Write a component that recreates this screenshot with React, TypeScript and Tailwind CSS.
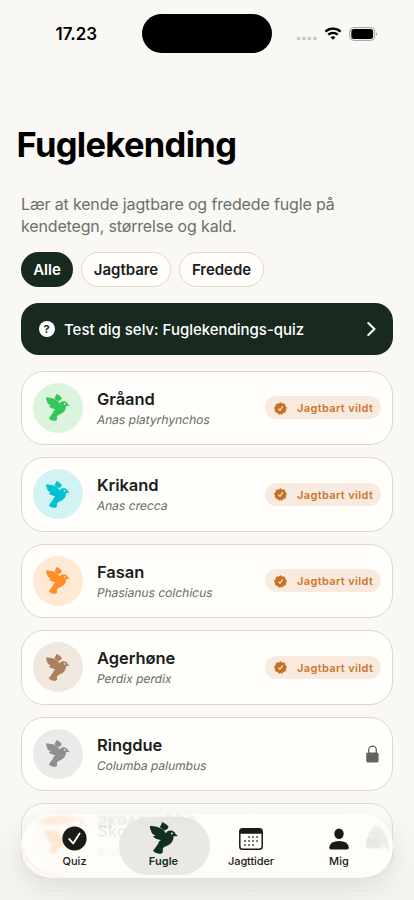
import React from 'react';

interface Bird {
  name: string;
  latin: string;
  color: string;
  huntable: boolean;
}

const BIRDS: Bird[] = [
  { name: 'Gråand', latin: 'Anas platyrhynchos', color: '#34c759', huntable: true },
  { name: 'Krikand', latin: 'Anas crecca', color: '#00c3d0', huntable: true },
  { name: 'Fasan', latin: 'Phasianus colchicus', color: '#ff8d28', huntable: true },
  { name: 'Agerhøne', latin: 'Perdix perdix', color: '#ac7f5e', huntable: true },
  { name: 'Ringdue', latin: 'Columba palumbus', color: '#8e8e93', huntable: false },
  { name: 'Skovsneppe', latin: 'Scolopax rusticola', color: '#ff8d28', huntable: false },
];

const BirdIcon = ({ className }: { className?: string }) => (
  <svg viewBox="0 0 82 94" className={className} fill="currentColor">
    <path d="M35 0C44 3 52 9 54 14C54 19 49 22 43 25C37 22 31 19 29 15C30 10 35 7 35 0Z" />
    <path
      fillRule="evenodd"
      d="M0 11C14 12 32 16 40 24C43 27 45 31 47 33C49 27 55 24 62 25C69 26 73 30 75 35L82 41L69 42C69 58 59 68 45 72C38 75 36 79 38 86C37 92 33 94 28 93C21 93 15 90 9 85C14 77 22 69 25 62C24 59 28 56 32 53C21 52 12 48 9 42C12 41 15 41 17 40C8 37 3 32 3 26C0 21 -1 16 0 11ZM64 31A3 3 0 1 0 64 37A3 3 0 1 0 64 31Z"
    />
  </svg>
);

const SealIcon = () => (
  <svg viewBox="0 0 24 24" className="h-[13px] w-[13px] shrink-0">
    <path
      fill="#c96f22"
      d="M12 1L15.4 3.4L19.6 3.6L20.6 7.6L23.4 10.6L21.8 14.2L21.4 18.4L17.6 19.8L14.8 22.8L12 21.8L9.2 22.8L6.4 19.8L2.6 18.4L2.2 14.2L0.6 10.6L3.4 7.6L4.4 3.6L8.6 3.4Z"
      stroke="#c96f22"
      strokeLinejoin="round"
    />
    <path d="M8.4 12.6L11 15.6L15.6 8.6" fill="none" stroke="#f9eadf" strokeWidth="2" strokeLinecap="round" strokeLinejoin="round" />
  </svg>
);

const LockIcon = () => (
  <svg viewBox="0 0 13 18" className="mr-[2px] h-[18px] w-[13px]">
    <path d="M2.7 8V4.9a3.8 3.8 0 0 1 7.6 0V8" fill="none" stroke="#5f665e" strokeWidth="1.3" />
    <rect x="0.2" y="7.4" width="12.4" height="10.1" rx="1.7" fill="#5f665e" />
  </svg>
);

const StatusBar = () => (
  <div className="flex h-[52px] items-start pt-[14px]">
    <div className="w-[142px] pl-[55.5px] pt-[7px] text-[17px] leading-[26px] font-semibold">17.23</div>
    <div className="h-[38.5px] w-[130px] rounded-full bg-black" />
    <svg viewBox="0 0 84 20" className="mt-[10px] ml-[23px] h-[20px] w-[84px]">
      <g fill="#c9c8c4">
        <circle cx="3.5" cy="14.4" r="1.9" />
        <circle cx="9" cy="14.4" r="1.9" />
        <circle cx="14.4" cy="14.4" r="1.9" />
        <circle cx="19.8" cy="14.4" r="1.9" />
      </g>
      <g fill="none" stroke="#000" strokeWidth="2.3">
        <path d="M30.4 7.6a11.3 11.3 0 0 1 15.2 0" />
        <path d="M33.2 10.7a7.1 7.1 0 0 1 9.6 0" />
      </g>
      <path d="M35.5 13.2a4.1 4.1 0 0 1 5 0L38 15.8Z" fill="#000" />
      <rect x="54.7" y="3.6" width="25" height="12.8" rx="4" fill="none" stroke="#a3a29f" />
      <rect x="56.3" y="5.1" width="21.8" height="9.8" rx="2.7" fill="#000" />
      <path d="M81 8.2c1.6.6 1.6 3 0 3.6Z" fill="#a3a29f" />
    </svg>
  </div>
);

const BirdCard = ({ bird }: { bird: Bird }) => (
  <div className="flex h-[74.5px] shrink-0 items-center rounded-[23px] border border-[#ddd8c6] bg-[#fffefb] px-[11px]">
    <div className="relative flex h-[50px] w-[50px] items-center justify-center" style={{ color: bird.color }}>
      <div className="absolute inset-0 rounded-full bg-current opacity-[0.18]" />
      <BirdIcon className="h-[27px] w-[24px]" />
    </div>
    <div className="ml-[14px] flex-1 pt-[2px]">
      <p className="text-[16.5px] leading-[22px] font-semibold tracking-[-0.05px] text-[#1a211d]">{bird.name}</p>
      <p className="-skew-x-[11deg] text-[12px] leading-[20px] tracking-[0.01px] text-[#666b65]">{bird.latin}</p>
    </div>
    {bird.huntable ? (
      <div className="flex h-[23px] w-[116px] items-center gap-[10px] rounded-full bg-[#f9eadf] pt-[1px] pl-[9px] text-[11px] font-semibold tracking-[0.36px] whitespace-nowrap text-[#cc7630]">
        <SealIcon />
        Jagtbart vildt
      </div>
    ) : (
      <LockIcon />
    )}
  </div>
);

const TabBar = () => (
  <nav className="absolute top-[814px] left-[21px] flex h-[64px] w-[372px] overflow-hidden rounded-full bg-[#fefdfa]/90 pt-[3px] pr-[4px] pl-[9px] text-[11px] leading-[14px] font-medium tracking-[0.05px] text-[#1c1a16] shadow-[0_8px_28px_rgba(0,0,0,0.1)]">
    {/* refraction of the card that lies under the glass */}
    <div aria-hidden="true" className="absolute top-0 left-[76px] -scale-y-100 text-[16.5px] leading-[16px] font-semibold text-black/10 blur-[0.8px]">
      Skovsneppe
    </div>
    <svg aria-hidden="true" viewBox="0 0 372 64" className="absolute inset-0 h-[64px] w-[372px]">
      <g className="blur-[1.2px]" opacity="0.15">
        <path d="M15 7Q34 -1 58 4Q50 11 35 11Q27 12 21 9Z" fill="#ff9b45" />
        <path d="M59 4Q66 12 49 19" fill="none" stroke="#ff9b45" strokeWidth="3" />
        <path d="M1 32Q4 58 42 63" fill="none" stroke="#ff9b45" strokeWidth="2" />
        <path d="M24 16Q35 16 40 21Q46 18 48 25Q45 32 39 33L34 39L27 37L31 30Q24 27 24 16Z" fill="#ff9b45" />
      </g>
      <path d="M345 34V25Q348 24 350 17Q355 7 361 15Q368 23 368 39L362 29V34Z" fill="#d8d7d3" opacity="0.45" className="blur-[1.2px]" />
    </svg>
    <div className="relative flex w-[89px] flex-col items-center pt-[9px]">
      <svg viewBox="0 0 24 24" className="h-[25px] w-[25px]">
        <circle cx="12" cy="12" r="11.6" fill="#1c1a16" />
        <path d="M7 12.5l3.7 4.2 6.2-9.4" fill="none" stroke="#fff" strokeWidth="1.8" strokeLinecap="round" strokeLinejoin="round" />
      </svg>
      <span className="mt-[2.5px]">Quiz</span>
    </div>
    <div className="relative flex h-[58px] w-[91px] flex-col items-center rounded-full bg-[#e5e4e1]/85 pt-[5px] font-semibold text-[#12301f]">
      <BirdIcon className="mr-[2px] h-[32px] w-[28px]" />
      <span className="-mt-[0.5px] mr-[2px]">Fugle</span>
    </div>
    <div className="relative flex w-[83px] flex-col items-center pt-[11px]">
      <svg viewBox="0 0 24 22" className="mr-[1px] h-[22px] w-[24px]">
        <rect x="0.8" y="0.8" width="22.4" height="20.4" rx="2.8" fill="none" stroke="#1c1a16" strokeWidth="1.5" />
        <path d="M1 5.8V3.6Q1 1 4 1H20Q23 1 23 3.6V5.8Z" fill="#1c1a16" />
        <g stroke="#1c1a16" strokeWidth="1.5" strokeDasharray="1.5 2.5">
          <path d="M9.3 9.1H19M5.3 13.1H19M5.3 17.1H15" />
        </g>
      </svg>
      <span className="mt-[3.5px] mr-[1px] tracking-[-0.1px]">Jagttider</span>
    </div>
    <div className="relative flex w-[92px] flex-col items-center pt-[11px]">
      <svg viewBox="0 0 20 22" className="h-[22px] w-[20px]" fill="#1c1a16">
        <ellipse cx="10" cy="5.8" rx="4.7" ry="5.2" />
        <path d="M2 21.5Q0 21.5 .2 19.5Q1.4 13.1 10 13.1T19.8 19.5Q20 21.5 18 21.5Z" />
      </svg>
      <span className="mt-[3.5px]">Mig</span>
    </div>
  </nav>
);

const App: React.FC = () => {
  return (
    <div className="relative h-[900px] w-[414px] overflow-hidden bg-[#f9f8f4] font-['Inter','Liberation_Sans',sans-serif] text-black">
      <StatusBar />
      <h1 className="mt-[71px] ml-[16.5px] text-[34.5px] leading-[44px] font-bold tracking-[-0.68px]">Fuglekending</h1>
      <main className="mt-[26px] flex flex-col px-[21px]">
        <p className="text-[16px] leading-[22px] tracking-[-0.15px] whitespace-nowrap text-[#6b7069]">
          Lær at kende jagtbare og fredede fugle på
          <br />
          kendetegn, størrelse og kald.
        </p>
        <div className="mt-[14.5px] flex gap-[8px] text-[15px] font-semibold tracking-[-0.03px] text-[#1a211d]">
          <div className="flex h-[35.5px] w-[52px] items-center justify-center rounded-full bg-[#18291f] pt-[1px] text-white">Alle</div>
          <div className="flex h-[35.5px] w-[90px] items-center justify-center rounded-full border border-[#e0d9c7] bg-[#fffefb] pt-[1px]">Jagtbare</div>
          <div className="flex h-[35.5px] w-[85px] items-center justify-center rounded-full border border-[#e0d9c7] bg-[#fffefb] pt-[1px]">Fredede</div>
        </div>
        <div className="mt-[16px] flex h-[51.5px] items-center rounded-[18px] bg-[#18291f] pr-[17px] pl-[17.5px] text-white">
          <div className="flex h-[16px] w-[16px] items-center justify-center rounded-full bg-white text-[11px] font-bold text-[#18291f]">?</div>
          <span className="ml-[9.5px] flex-1 pt-[2px] text-[15px] font-medium tracking-[-0.02px]">Test dig selv: Fuglekendings-quiz</span>
          <svg viewBox="0 0 9 14" className="h-[14px] w-[9px]" fill="none" stroke="#fff" strokeWidth="2" strokeLinecap="round" strokeLinejoin="round">
            <path d="M1.3 1L7.5 7L1.3 13" />
          </svg>
        </div>
        <div className="mt-[16px] flex flex-col gap-[12px]">
          {BIRDS.map((bird) => (
            <BirdCard key={bird.name} bird={bird} />
          ))}
          <div className="h-[74.5px] rounded-[23px] border border-[#ddd8c6] bg-[#fffefb]" />
        </div>
      </main>
      <div className="absolute inset-x-0 top-[790px] h-[110px] bg-linear-to-b from-[#f3f2ee]/0 via-[#f3f2ee]/40 to-[#f3f2ee]/90" />
      <TabBar />
    </div>
  );
};

export default App;
